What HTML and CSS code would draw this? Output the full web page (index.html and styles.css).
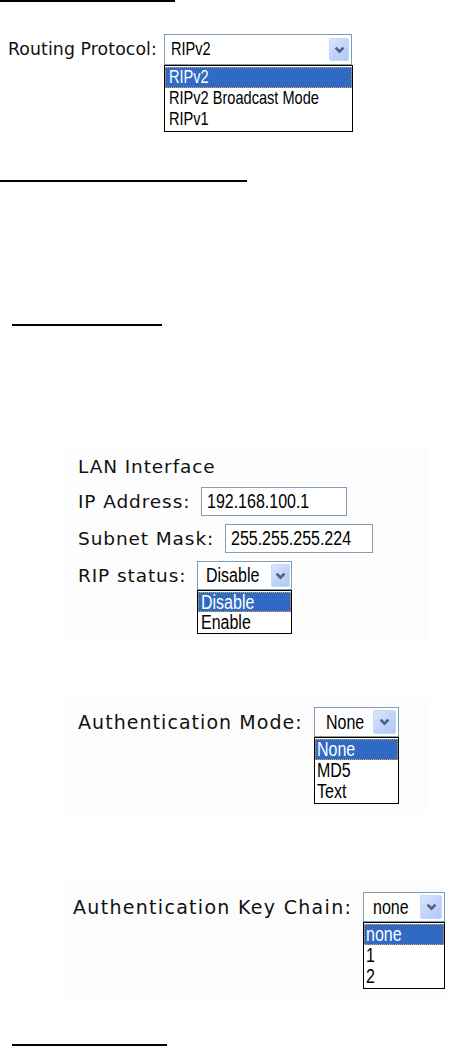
FILE: index.html
```html
<!DOCTYPE html>
<html lang="en">
<head>
<meta charset="utf-8">
<title>RIP settings</title>
<link rel="stylesheet" href="styles.css">
</head>
<body>
<div class="page">
  <div class="rule rule-1"></div>

  <section class="shot shot-routing">
    <div class="field">
      <span class="label">Routing Protocol:</span>
      <div class="combo">
        <div class="select sel-routing">
          <span class="value"><span class="narrow">RIPv2</span></span>
          <span class="arrow"><svg viewBox="0 0 11 8" width="11" height="8"><polyline points="1.6,1.6 5.5,5.6 9.4,1.6"/></svg></span>
        </div>
        <ul class="list list-routing">
          <li class="hl"><span class="narrow">RIPv2</span></li>
          <li><span class="narrow">RIPv2 Broadcast Mode</span></li>
          <li><span class="narrow">RIPv1</span></li>
        </ul>
      </div>
    </div>
  </section>

  <div class="rule rule-2"></div>
  <div class="rule rule-3"></div>

  <section class="shot panel shot-lan">
    <div class="heading">LAN Interface</div>
    <div class="field">
      <span class="label">IP Address:</span>
      <div class="input in-ip"><span class="narrow">192.168.100.1</span></div>
    </div>
    <div class="field">
      <span class="label">Subnet Mask:</span>
      <div class="input in-mask"><span class="narrow">255.255.255.224</span></div>
    </div>
    <div class="field">
      <span class="label">RIP status:</span>
      <div class="combo">
        <div class="select sel-rip">
          <span class="value"><span class="narrow">Disable</span></span>
          <span class="arrow"><svg viewBox="0 0 11 8" width="11" height="8"><polyline points="1.6,1.6 5.5,5.6 9.4,1.6"/></svg></span>
        </div>
        <ul class="list list-rip">
          <li class="hl"><span class="narrow">Disable</span></li>
          <li><span class="narrow">Enable</span></li>
        </ul>
      </div>
    </div>
  </section>

  <section class="shot panel shot-auth">
    <div class="field">
      <span class="label">Authentication Mode:</span>
      <div class="combo">
        <div class="select sel-auth">
          <span class="value"><span class="narrow">None</span></span>
          <span class="arrow"><svg viewBox="0 0 11 8" width="11" height="8"><polyline points="1.6,1.6 5.5,5.6 9.4,1.6"/></svg></span>
        </div>
        <ul class="list">
          <li class="hl"><span class="narrow">None</span></li>
          <li><span class="narrow">MD5</span></li>
          <li><span class="narrow">Text</span></li>
        </ul>
      </div>
    </div>
  </section>

  <section class="shot panel shot-key">
    <div class="field">
      <span class="label">Authentication Key Chain:</span>
      <div class="combo">
        <div class="select sel-key">
          <span class="value"><span class="narrow">none</span></span>
          <span class="arrow"><svg viewBox="0 0 11 8" width="11" height="8"><polyline points="1.6,1.6 5.5,5.6 9.4,1.6"/></svg></span>
        </div>
        <ul class="list">
          <li class="hl"><span class="narrow">none</span></li>
          <li><span class="narrow">1</span></li>
          <li><span class="narrow">2</span></li>
        </ul>
      </div>
    </div>
  </section>

  <div class="rule rule-4"></div>
</div>
</body>
</html>
```

FILE: styles.css
```css
* { box-sizing: border-box; }

html, body {
  margin: 0;
  padding: 0;
  background: #fff;
}

body {
  width: 450px;
  height: 1046px;
  overflow: hidden;
}

.page {
  display: flex;
  flex-direction: column;
  align-items: flex-start;
}

/* horizontal rules */
.rule { height: 2px; background: #000; }
.rule-1 { width: 175px; }
.rule-2 { width: 247px; margin-top: 48px; }
.rule-3 { width: 150px; margin-top: 142px; margin-left: 12px; }
.rule-4 { width: 155px; margin-top: 46px; margin-left: 12px; }

/* generic pieces */
.panel { background: #fdfdfd; }

.field {
  display: flex;
  align-items: flex-start;
}

.label,
.heading {
  font-family: "DejaVu Sans", Verdana, sans-serif;
  color: #111;
  white-space: nowrap;
}

.combo {
  display: flex;
  flex-direction: column;
}

.select,
.input {
  display: flex;
  align-items: center;
  background: #fff;
  border: 1px solid #7f9db9;
  font-family: "Liberation Sans", Arial, sans-serif;
  font-size: 19.5px;
  color: #000;
  white-space: nowrap;
  overflow: hidden;
}

/* the screenshots show a condensed UI face */
.narrow {
  display: inline-block;
  transform: scaleX(0.82);
  transform-origin: 0 50%;
}

.value { flex: 1; }

.arrow {
  align-self: stretch;
  margin: 2px 2px 2px 0;
  display: flex;
  align-items: center;
  justify-content: center;
  border: 1px solid #c6d6fb;
  border-radius: 2px;
  background: linear-gradient(135deg, #dde7fd 0%, #c2d4f9 50%, #b3c7f5 100%);
}

.arrow svg {
  fill: none;
  stroke: #4d6185;
  stroke-width: 2.6;
  stroke-linejoin: miter;
}

.list {
  margin: 0;
  padding: 1px 0;
  list-style: none;
  background: #fff;
  border: 1px solid #000;
  font-family: "Liberation Sans", Arial, sans-serif;
  font-size: 19.5px;
  color: #000;
  white-space: nowrap;
}

.list li {
  height: 21px;
  line-height: 21px;
  padding-left: 2px;
}

.list li.hl {
  background: #316ac5;
  color: #fff;
  outline: 1px dotted #e9a23b;
  outline-offset: -1px;
}

/* routing protocol screenshot */
.shot-routing {
  margin-top: 32px;
  padding-left: 8px;
}

.shot-routing .label {
  width: 156px;
  font-size: 17.3px;
  letter-spacing: 0.1px;
  line-height: 31px;
}

.sel-routing {
  width: 188px;
  height: 31px;
  padding-left: 6px;
  font-size: 17.8px;
}

.sel-routing .arrow { width: 20px; margin-top: 3px; margin-bottom: 3px; }

.list-routing { font-size: 17.8px; }
.list-routing li { padding-left: 4px; }

/* LAN interface screenshot */
.shot-lan {
  margin-top: 121px;
  margin-left: 63px;
  width: 365px;
  height: 193px;
  padding: 8px 0 0 15px;
  display: flex;
  flex-direction: column;
  gap: 8px;
}

.shot-lan .heading,
.shot-lan .label {
  font-size: 18.5px;
  letter-spacing: 0.9px;
}

.shot-lan .heading { line-height: 24px; }

.shot-lan .label {
  line-height: 29px;
  margin-right: 11px;
}

.input {
  height: 29px;
  padding-left: 5px;
}

.in-ip { width: 146px; }
.in-mask { width: 148px; }

.sel-rip {
  width: 95px;
  height: 29px;
  padding-left: 8px;
}

.sel-rip .arrow { width: 24px; margin-right: 1px; }

.list-rip li {
  height: 20px;
  line-height: 20px;
  padding-left: 3px;
}

/* authentication mode screenshot */
.shot-auth {
  margin-top: 57px;
  margin-left: 65px;
  width: 363px;
  padding: 10px 0 9px 13px;
}

.shot-auth .label {
  font-size: 19px;
  letter-spacing: 1.05px;
  line-height: 30px;
  margin-right: 11px;
}

.sel-auth {
  width: 85px;
  height: 30px;
  padding-left: 11px;
}

.sel-auth .arrow { width: 23px; }

/* authentication key chain screenshot */
.shot-key {
  margin-top: 71px;
  margin-left: 63px;
  width: 382px;
  padding: 8px 0 9px 10px;
}

.shot-key .label {
  font-size: 19px;
  letter-spacing: 1.3px;
  line-height: 30px;
  margin-right: 11px;
}

.sel-key {
  width: 82px;
  height: 30px;
  padding-left: 9px;
}

.sel-key .arrow { width: 22px; }
```
